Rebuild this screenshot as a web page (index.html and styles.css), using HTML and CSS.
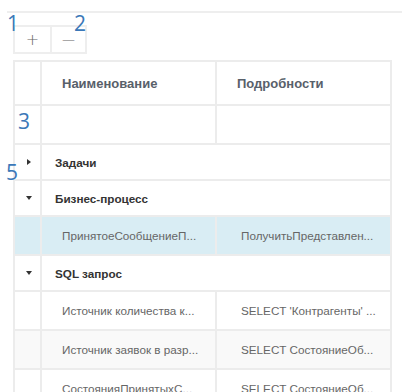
FILE: index.html
```html
<!DOCTYPE html>
<html lang="ru">
<head>
    <meta charset="UTF-8">
    <meta name="viewport" content="width=device-width, initial-scale=1.0">
    <title>Дерево объектов</title>
    <link rel="stylesheet" href="styles.css">
</head>
<body>
    <div class="page">
        <div class="toolbar">
            <div class="btn-group">
                <button class="tool-btn">+</button>
                <button class="tool-btn minus">&mdash;</button>
            </div>
        </div>

        <div class="grid">
            <div class="row head">
                <div class="cell exp"></div>
                <div class="cell name">Наименование</div>
                <div class="cell info">Подробности</div>
            </div>
            <div class="row filter">
                <div class="cell exp"></div>
                <div class="cell name"></div>
                <div class="cell info"></div>
            </div>

            <div class="row group">
                <div class="cell exp"><span class="arrow closed"></span></div>
                <div class="cell title">Задачи</div>
            </div>

            <div class="row group">
                <div class="cell exp"><span class="arrow open"></span></div>
                <div class="cell title">Бизнес-процесс</div>
            </div>
            <div class="row item selected">
                <div class="cell exp"></div>
                <div class="cell name">ПринятоеСообщениеП...</div>
                <div class="cell info">ПолучитьПредставлен...</div>
            </div>

            <div class="row group">
                <div class="cell exp"><span class="arrow open"></span></div>
                <div class="cell title">SQL запрос</div>
            </div>
            <div class="row item">
                <div class="cell exp"></div>
                <div class="cell name">Источник количества к...</div>
                <div class="cell info">SELECT 'Контрагенты' ...</div>
            </div>
            <div class="row item striped">
                <div class="cell exp"></div>
                <div class="cell name">Источник заявок в разр...</div>
                <div class="cell info">SELECT СостояниеОб...</div>
            </div>
            <div class="row item">
                <div class="cell exp"></div>
                <div class="cell name">СостоянияПринятыхС...</div>
                <div class="cell info">SELECT СостояниеОб...</div>
            </div>
        </div>

        <!-- метки-пояснения поверх интерфейса -->
        <span class="mark m1">1</span>
        <span class="mark m2">2</span>
        <span class="mark m3">3</span>
        <span class="mark m5">5</span>
    </div>
</body>
</html>
```

FILE: styles.css
```css
* {
    margin: 0;
    padding: 0;
    box-sizing: border-box;
}

body {
    background-color: white;
    font-family: 'Liberation Sans', Arial, sans-serif;
    overflow: hidden;
}

.page {
    position: relative;
    width: 402px;
    height: 392px;
    padding-top: 11px;
}

.toolbar {
    margin-left: 7px;
    border-top: 2px solid #eeeeee;
    padding: 12px 0 6px 6px;
}

.btn-group {
    display: inline-flex;
    border: 2px solid #eeeeee;
}

.tool-btn {
    width: 35px;
    height: 25px;
    background: white;
    border: none;
    color: #666;
    font-family: 'DejaVu Sans', sans-serif;
    font-size: 16px;
    font-weight: 300;
    line-height: 25px;
    cursor: pointer;
}

.tool-btn + .tool-btn {
    border-left: 2px solid #eeeeee;
}

.tool-btn.minus {
    font-size: 13px;
    padding-bottom: 3px;
}

.grid {
    margin-left: 13px;
    width: 379px;
    border: 2px solid #ececec;
    border-bottom: none;
}

.row {
    display: flex;
    height: 39px;
    border-bottom: 2px solid #ececec;
}

.row.head {
    height: 44px;
}

.row.group {
    height: 36px;
}

.row.selected {
    background-color: #d9edf4;
}

.row.striped {
    background-color: #f9f9f9;
}

.cell {
    display: flex;
    align-items: center;
    white-space: nowrap;
    overflow: hidden;
    text-overflow: ellipsis;
}

.cell.exp {
    width: 27px;
    flex-shrink: 0;
    justify-content: center;
    padding-left: 2px;
    border-right: 2px solid #ececec;
}

.cell.name {
    width: 175px;
    flex-shrink: 0;
    padding-left: 20px;
    border-right: 2px solid #ececec;
}

.cell.info {
    flex: 1;
    padding-left: 24px;
}

.head .cell {
    font-size: 13px;
    font-weight: 700;
    color: #58606a;
}

.head .cell.info {
    padding-left: 20px;
}

.item .cell {
    font-size: 11.7px;
    color: #666;
}

.cell.title {
    flex: 1;
    padding-left: 13px;
    font-size: 11.7px;
    font-weight: 700;
    color: #333;
}

.arrow {
    display: block;
    width: 0;
    height: 0;
}

.arrow.closed {
    border-left: 4px solid #333;
    border-top: 3px solid transparent;
    border-bottom: 3px solid transparent;
}

.arrow.open {
    border-top: 4px solid #333;
    border-left: 3px solid transparent;
    border-right: 3px solid transparent;
}

.mark {
    position: absolute;
    font-family: 'Open Sans', sans-serif;
    font-size: 21px;
    line-height: 1;
    color: #3b78b8;
}

.m1 { left: 7px; top: 13px; }
.m2 { left: 74px; top: 13px; }
.m3 { left: 18px; top: 111px; }
.m5 { left: 6px; top: 162px; }
```
